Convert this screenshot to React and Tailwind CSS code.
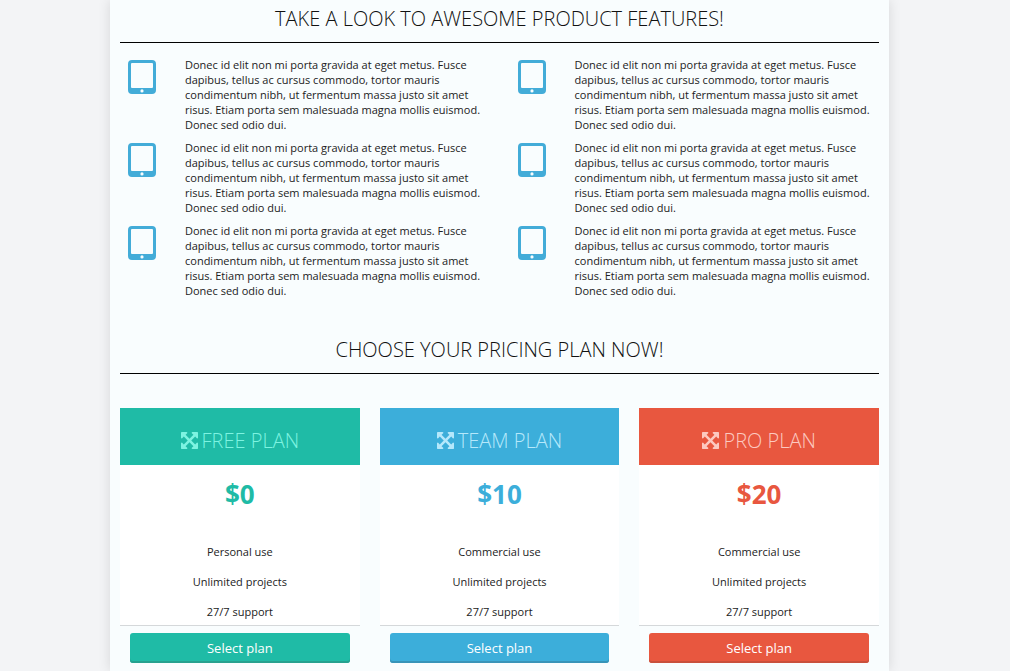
import React from "react";

const FEATURE_TEXT =
  "Donec id elit non mi porta gravida at eget metus. Fusce dapibus, tellus ac cursus commodo, tortor mauris condimentum nibh, ut fermentum massa justo sit amet risus. Etiam porta sem malesuada magna mollis euismod. Donec sed odio dui.";

const FEATURES = [1, 2, 3, 4, 5, 6];

const PLANS = [
  {
    name: "Free plan",
    price: "$0",
    items: ["Personal use", "Unlimited projects", "27/7 support"],
    header: "bg-[#1fbba6] text-[#7df3e1]",
    priceColor: "text-[#1fbba6]",
    button: "bg-[#1fbba6] shadow-[inset_0_-2px_0_#26a18f]",
  },
  {
    name: "Team plan",
    price: "$10",
    items: ["Commercial use", "Unlimited projects", "27/7 support"],
    header: "bg-[#3caeda] text-[#b5e8fb]",
    priceColor: "text-[#3caeda]",
    button: "bg-[#3caeda] shadow-[inset_0_-2px_0_#3894b8]",
  },
  {
    name: "Pro plan",
    price: "$20",
    items: ["Commercial use", "Unlimited projects", "27/7 support"],
    header: "bg-[#e8573f] text-[#fcc9c0]",
    priceColor: "text-[#e8573f]",
    button: "bg-[#e8573f] shadow-[inset_0_-2px_0_#c9503c]",
  },
];

function TabletIcon() {
  return (
    <svg viewBox="0 0 28 34" className="h-[34px] w-7 shrink-0 fill-[#43acd8]" aria-hidden="true">
      <path
        fillRule="evenodd"
        d="M4 0H24Q28 0 28 4V30Q28 34 24 34H4Q0 34 0 30V4Q0 0 4 0ZM4 3Q3 3 3 4V27Q3 28 4 28H24Q25 28 25 27V4Q25 3 24 3ZM14 29.3A1.6 1.6 0 1 0 14 32.5A1.6 1.6 0 1 0 14 29.3Z"
      />
    </svg>
  );
}

function ArrowsIcon() {
  return (
    <svg viewBox="128 128 1536 1536" className="size-[17px] fill-current" aria-hidden="true">
      <path d="M1411 541l-355 355 355 355 144-144q29-31 70-14 39 17 39 59v448q0 26-19 45t-45 19h-448q-42 0-59-40-17-39 14-69l144-144-355-355-355 355 144 144q31 30 14 69-17 40-59 40h-448q-26 0-45-19t-19-45v-448q0-42 40-59 39-17 69 14l144 144 355-355-355-355-144 144q-19 19-45 19-12 0-24-5-40-17-40-59v-448q0-26 19-45t45-19h448q42 0 59 40 17 39-14 69l-144 144 355 355 355-355-144-144q-31-30-14-69 17-40 59-40h448q26 0 45 19t19 45v448q0 42-39 59-13 5-25 5-26 0-45-19z" />
    </svg>
  );
}

function SectionTitle({ children }) {
  return (
    <h2 className="border-b border-black pb-[9px] text-center text-xl leading-7 font-light text-[#111] uppercase">
      {children}
    </h2>
  );
}

function Plan({ plan }) {
  return (
    <article>
      <div className="bg-white">
        <h3 className={`flex items-center justify-center gap-1 pt-[17px] pb-[9px] text-xl leading-[31px] font-light uppercase ${plan.header}`}>
          <ArrowsIcon />
          {plan.name}
        </h3>
        <p className={`pt-[13px] pb-[29px] text-center text-[26px] leading-8 font-bold ${plan.priceColor}`}>
          {plan.price}
        </p>
        <ul className="grid gap-1 border-b border-[#d5d8da] text-center text-[11px] leading-[26px]">
          {plan.items.map((item) => (
            <li key={item}>{item}</li>
          ))}
        </ul>
      </div>
      <div className="px-2.5 pt-[7px] pb-2">
        <button
          type="button"
          className={`block w-full rounded-[3px] text-[13px] leading-[30px] text-white ${plan.button}`}
        >
          Select plan
        </button>
      </div>
    </article>
  );
}

export default function App() {
  return (
    <div className="min-h-screen bg-[#f3f4f6] pr-[11px] font-['Open_Sans',sans-serif] text-[#222]">
      <main className="mx-auto min-h-screen max-w-[779px] bg-[#f9fdfe] px-2.5 pt-[5px] shadow-[0_0_12px_rgba(0,0,0,0.12)]">
        <section>
          <SectionTitle>Take a look to awesome product features!</SectionTitle>
          <div className="grid gap-x-5 gap-y-2 pt-3.5 sm:grid-cols-2">
            {FEATURES.map((n) => (
              <div key={n} className="flex gap-[29px] pl-2">
                <div className="pt-[3px]">
                  <TabletIcon />
                </div>
                <p className="text-[11px] leading-[15px]">{FEATURE_TEXT}</p>
              </div>
            ))}
          </div>
        </section>
        <section className="pt-[38px]">
          <SectionTitle>Choose your pricing plan now!</SectionTitle>
          <div className="grid gap-5 pt-[34px] sm:grid-cols-3">
            {PLANS.map((plan) => (
              <Plan key={plan.name} plan={plan} />
            ))}
          </div>
        </section>
      </main>
    </div>
  );
}
